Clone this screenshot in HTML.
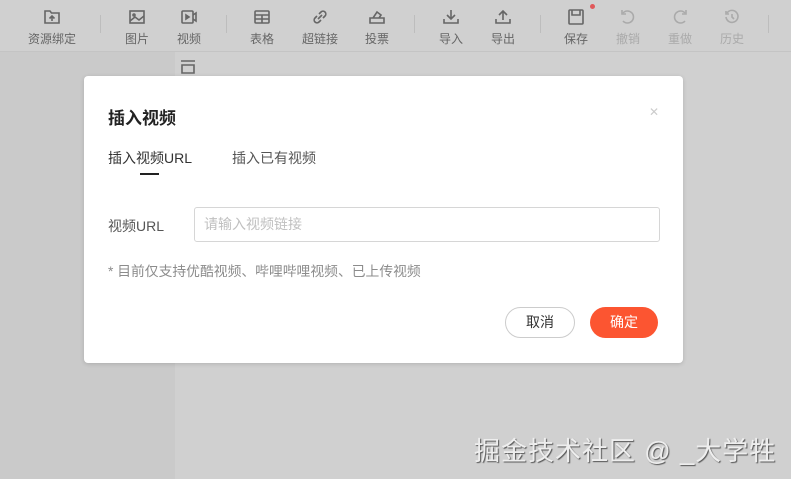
<!DOCTYPE html><html><head><meta charset="utf-8"><style>
body{margin:0;width:791px;height:479px;overflow:hidden;background:#d0d0d0;font-family:"Liberation Sans","Noto Sans CJK SC",sans-serif;position:relative}
.left{position:absolute;left:0;top:52px;width:175px;height:427px;background:#cacaca}
.tb{position:absolute;left:0;top:0;width:791px;height:51px;border-bottom:1px solid #c4c4c4;background:#d0d0d0}
.it{position:absolute;top:0;width:60px;margin-left:-30px;text-align:center;font-size:12px;color:#666}
.it svg{position:absolute;left:21px;top:8px}
.it span{position:absolute;left:0;right:0;top:30px}
.dis{color:#aaa}
.sep{position:absolute;top:15px;width:1px;height:18px;background:#bdbdbd}
.modal{position:absolute;left:84px;top:76px;width:599px;height:287px;background:#fff;border-radius:4px;box-shadow:0 1px 4px rgba(0,0,0,.15)}
.t{position:absolute;font-size:17px;font-weight:bold;color:#222;left:24px;top:28px}
.x{position:absolute;left:565px;top:29px;font-size:12px;color:#ccc}
.tab{position:absolute;top:72px;font-size:14px;color:#333}
.ul{position:absolute;left:56px;top:97px;width:19px;height:2px;background:#222}
.lab{position:absolute;left:24px;top:140px;font-size:14px;color:#555}
.inp{position:absolute;left:110px;top:131px;width:455px;height:33px;border:1px solid #d6d6d6;border-radius:3px;font-size:14px;color:#c0c0c0;line-height:33px;padding-left:9px;box-sizing:content-box}
.tip{position:absolute;left:24px;top:184px;font-size:13.8px;color:#8c8c8c}
.btn{position:absolute;top:231px;height:31px;width:68px;border-radius:16px;font-size:14px;text-align:center;line-height:31px}
.wm{position:absolute;left:474px;top:431px;font-size:26px;letter-spacing:1px;color:#eee;text-shadow:1px 1px 1px #555;white-space:nowrap}
</style></head><body>
<div class="left"></div>
<div class="tb">
<div class="it" style="left:52px"><svg width="18" height="18" viewBox="0 0 18 18" fill="none" stroke="#666" stroke-width="1.6"><path d="M2 3h5l1.5 2H16v10H2z"/><path d="M9 13V8M6.5 10.5 9 8l2.5 2.5"/></svg><span>资源绑定</span></div>
<div class="sep" style="left:100px"></div>
<div class="it" style="left:137px"><svg width="18" height="18" viewBox="0 0 18 18" fill="none" stroke="#666" stroke-width="1.6"><rect x="2" y="3" width="14" height="12"/><path d="M2 13l5-4 4 3 5-4"/><circle cx="6" cy="7" r="1"/></svg><span>图片</span></div>
<div class="it" style="left:189px"><svg width="18" height="18" viewBox="0 0 18 18" fill="none" stroke="#666" stroke-width="1.6"><rect x="2" y="3" width="11" height="12" rx="1"/><path d="M13 7l3-2v8l-3-2"/><path d="M6 7v4l3-2z" fill="#666"/></svg><span>视频</span></div>
<div class="sep" style="left:226px"></div>
<div class="it" style="left:262px"><svg width="18" height="18" viewBox="0 0 18 18" fill="none" stroke="#666" stroke-width="1.6"><rect x="2" y="3" width="14" height="12" rx="1"/><path d="M2 7h14M2 11h14M9 7v8"/></svg><span>表格</span></div>
<div class="it" style="left:320px"><svg width="18" height="18" viewBox="0 0 18 18" fill="none" stroke="#666" stroke-width="1.6"><path d="M8 6l2-2a2.5 2.5 0 0 1 4 4l-2 2M10 12l-2 2a2.5 2.5 0 0 1-4-4l2-2M7 11l4-4"/></svg><span>超链接</span></div>
<div class="it" style="left:377px"><svg width="18" height="18" viewBox="0 0 18 18" fill="none" stroke="#666" stroke-width="1.6"><path d="M2 10h14v5H2zM5 10l4-6 4 3-2 3"/></svg><span>投票</span></div>
<div class="sep" style="left:414px"></div>
<div class="it" style="left:451px"><svg width="18" height="18" viewBox="0 0 18 18" fill="none" stroke="#666" stroke-width="1.6"><path d="M9 2v9M5 7l4 4 4-4M2 11v4h14v-4"/></svg><span>导入</span></div>
<div class="it" style="left:503px"><svg width="18" height="18" viewBox="0 0 18 18" fill="none" stroke="#666" stroke-width="1.6"><path d="M9 12V3M5 7l4-4 4 4M2 11v4h14v-4"/></svg><span>导出</span></div>
<div class="sep" style="left:540px"></div>
<div class="it" style="left:576px"><svg width="18" height="18" viewBox="0 0 18 18" fill="none" stroke="#666" stroke-width="1.6"><rect x="2" y="2" width="14" height="14" rx="1"/><path d="M5 2v5h8V2"/></svg><span>保存</span></div>
<div style="position:absolute;left:590px;top:4px;width:5px;height:5px;border-radius:50%;background:#e0585a"></div>
<div class="it dis" style="left:628px"><svg width="18" height="18" viewBox="0 0 18 18" fill="none" stroke="#aaa" stroke-width="1.6"><path d="M4 5a6 6 0 1 1 0 8"/><path d="M3 2v4h4"/></svg><span>撤销</span></div>
<div class="it dis" style="left:680px"><svg width="18" height="18" viewBox="0 0 18 18" fill="none" stroke="#aaa" stroke-width="1.6"><path d="M14 5a6 6 0 1 0 0 8"/><path d="M15 2v4h-4"/></svg><span>重做</span></div>
<div class="it dis" style="left:732px"><svg width="18" height="18" viewBox="0 0 18 18" fill="none" stroke="#aaa" stroke-width="1.6"><path d="M4 5a6 6 0 1 1-1 4"/><path d="M9 6v3l2 2M3 3v3h3"/></svg><span>历史</span></div>
<div class="sep" style="left:768px"></div>
</div>
<svg style="position:absolute;left:180px;top:60px" width="16" height="14" viewBox="0 0 16 14" fill="none" stroke="#666" stroke-width="1.6"><path d="M1 1h14M2 5h12v8H2z"/></svg>
<div class="modal">
<div class="t">插入视频</div>
<div class="x">✕</div>
<div class="tab" style="left:24px">插入视频URL</div>
<div class="tab" style="left:148px;color:#555">插入已有视频</div>
<div class="ul"></div>
<div class="lab">视频URL</div>
<div class="inp">请输入视频链接</div>
<div class="tip">* 目前仅支持优酷视频、哔哩哔哩视频、已上传视频</div>
<div class="btn" style="left:421px;border:1px solid #ccc;height:29px;line-height:29px;color:#333">取消</div>
<div class="btn" style="left:506px;background:#fc5531;color:#fff">确定</div>
</div>
<div class="wm">掘金技术社区 @ _大学牲</div>
</body></html>
